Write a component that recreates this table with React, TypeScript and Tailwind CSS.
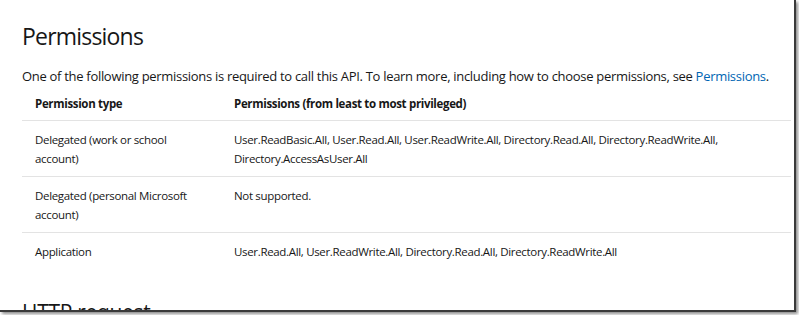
import React from "react"

const rows = [
  {
    type: ["Delegated (work or school", "account)"],
    perms: [
      "User.ReadBasic.All, User.Read.All, User.ReadWrite.All, Directory.Read.All, Directory.ReadWrite.All,",
      "Directory.AccessAsUser.All",
    ],
  },
  {
    type: ["Delegated (personal Microsoft", "account)"],
    perms: ["Not supported."],
  },
  {
    type: ["Application"],
    perms: ["User.Read.All, User.ReadWrite.All, Directory.Read.All, Directory.ReadWrite.All"],
  },
]

export default function App() {
  return (
    <div className="w-[799px] h-[315px] bg-white overflow-hidden" style={{ fontFamily: '"Open Sans", "Noto Sans", sans-serif' }}>
      <div className="w-[796px] h-[312px] bg-white overflow-hidden border-r-2 border-b-2 border-[#3a3a3a] shadow-[2px_2px_3px_rgba(0,0,0,0.45)]">
        <div className="pl-[22px] pr-[3px] text-[#171717]">
          <h1 className="pt-[21px] text-[23px] leading-[30px] font-medium tracking-[-0.8px]">Permissions</h1>
          <p className="mt-[15px] text-[13px] leading-[20px] tracking-[-0.3px] whitespace-nowrap">
            One of the following permissions is required to call this API. To learn more, including how to choose permissions, see{" "}
            <span className="text-[#0065b3]">Permissions</span>.
          </p>
          <div className="mt-[8px] text-[11.5px] tracking-[-0.33px]">
            <div className="flex border-b border-[#e3e3e3] pb-[7px]">
              <div className="w-[212px] pl-[13px] font-bold leading-[19px]">Permission type</div>
              <div className="flex-1 font-bold leading-[19px]">Permissions (from least to most privileged)</div>
            </div>
            {rows.map((r, i) => (
              <div key={i} className="flex border-b border-[#e3e3e3] pt-[9px] pb-[8px] last:border-b-0">
                <div className="w-[212px] pl-[13px] leading-[19px]">
                  {r.type.map((t) => (
                    <div key={t}>{t}</div>
                  ))}
                </div>
                <div className="flex-1 leading-[19px]">
                  {r.perms.map((t) => (
                    <div key={t} className="whitespace-nowrap">{t}</div>
                  ))}
                </div>
              </div>
            ))}
          </div>
          <h2 className="mt-[30px] text-[21px] leading-[26px] font-medium tracking-[-0.3px]">HTTP request</h2>
        </div>
      </div>
    </div>
  )
}
